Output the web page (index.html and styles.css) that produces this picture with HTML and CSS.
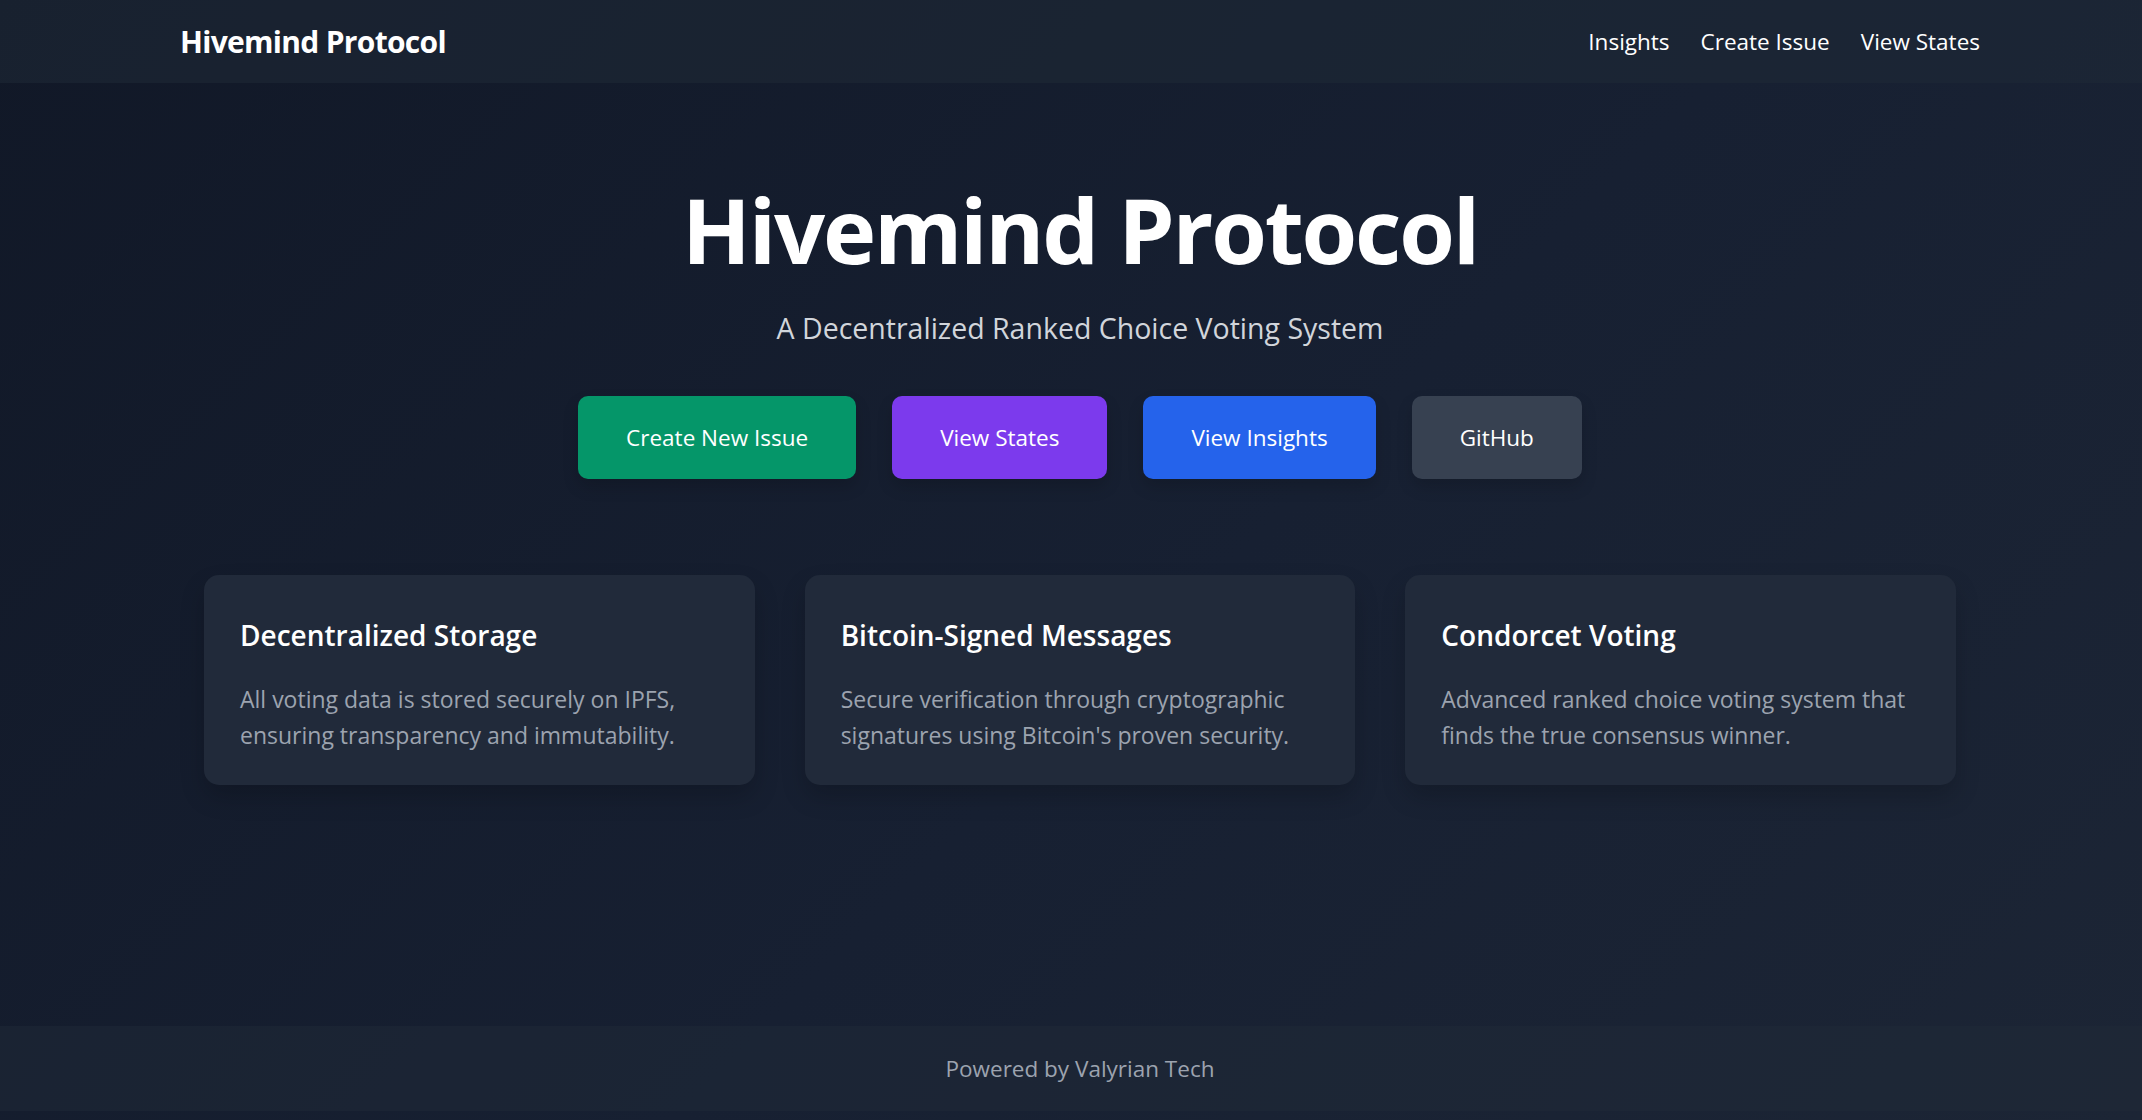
FILE: index.html
```html
<!DOCTYPE html>
<html lang="en">
<head>
<meta charset="utf-8">
<title>Hivemind Protocol</title>
<link rel="stylesheet" href="styles.css">
</head>
<body>
  <header class="site-header">
    <div class="container header-inner">
      <a class="logo" href="#">Hivemind Protocol</a>
      <nav class="nav">
        <a href="#">Insights</a>
        <a href="#">Create Issue</a>
        <a href="#">View States</a>
      </nav>
    </div>
  </header>

  <main class="main">
    <section class="hero">
      <h1 class="hero-title">Hivemind Protocol</h1>
      <p class="hero-sub">A Decentralized Ranked Choice Voting System</p>
      <div class="actions">
        <a class="btn btn-green" href="#">Create New Issue</a>
        <a class="btn btn-purple" href="#">View States</a>
        <a class="btn btn-blue" href="#">View Insights</a>
        <a class="btn btn-gray" href="#">GitHub</a>
      </div>
    </section>

    <section class="features">
      <div class="card">
        <h3 class="card-title">Decentralized Storage</h3>
        <p class="card-text">All voting data is stored securely on IPFS, ensuring transparency and immutability.</p>
      </div>
      <div class="card">
        <h3 class="card-title">Bitcoin-Signed Messages</h3>
        <p class="card-text">Secure verification through cryptographic signatures using Bitcoin's proven security.</p>
      </div>
      <div class="card">
        <h3 class="card-title">Condorcet Voting</h3>
        <p class="card-text">Advanced ranked choice voting system that finds the true consensus winner.</p>
      </div>
    </section>
  </main>

  <footer class="site-footer">
    <p class="footer-text">Powered by Valyrian Tech</p>
  </footer>
</body>
</html>
```

FILE: styles.css
```css
* { box-sizing: border-box; }

html, body {
  margin: 0;
  padding: 0;
  min-height: 100%;
}

body {
  font-family: "Open Sans", "Noto Sans", "Liberation Sans", sans-serif;
  color: #ffffff;
  background: linear-gradient(135deg, #111827 0%, #172032 55%, #1c2535 100%);
  min-height: 1120px;
  overflow-x: hidden;
}

a { color: inherit; text-decoration: none; }

.container {
  width: 1800px;
  margin: 0 auto;
}

.site-header {
  height: 83px;
  padding-left: 18px;
  background: rgba(31, 41, 55, 0.55);
}

.header-inner {
  height: 83px;
  display: flex;
  align-items: center;
  justify-content: space-between;
}

.logo {
  font-size: 30px;
  font-weight: 700;
  letter-spacing: -0.7px;
}

.nav {
  display: flex;
  gap: 31px;
  font-size: 22.5px;
}

.main {
  padding-left: 18px;
  height: 943px;
}

.hero {
  display: flex;
  flex-direction: column;
  align-items: center;
  padding-top: 101px;
}

.hero-title {
  margin: 0;
  font-size: 90px;
  line-height: 90px;
  font-weight: 700;
  letter-spacing: -2.2px;
}

.hero-sub {
  margin: 37px 0 0;
  font-size: 28.5px;
  line-height: 35px;
  color: #d1d5db;
}

.actions {
  display: flex;
  gap: 36px;
  margin-top: 50px;
}

.btn {
  height: 83px;
  display: flex;
  align-items: center;
  justify-content: center;
  padding: 0 48px;
  border-radius: 10px;
  font-size: 22.5px;
  box-shadow: 0 8px 16px rgba(0, 0, 0, 0.15);
}

.btn-green { background: #059669; }
.btn-purple { background: #7c3aed; }
.btn-blue { background: #2563eb; }
.btn-gray { background: #374151; }

.features {
  width: 1752px;
  margin: 96px auto 0;
  display: grid;
  grid-template-columns: repeat(3, 1fr);
  gap: 50px;
}

.card {
  height: 210px;
  background: #212a3a;
  border-radius: 15px;
  padding: 42px 36px 30px;
  box-shadow: 0 12px 24px rgba(0, 0, 0, 0.18);
}

.card-title {
  margin: 0;
  font-size: 28px;
  line-height: 36px;
  font-weight: 600;
}

.card-text {
  margin: 28px 0 0;
  font-size: 23px;
  line-height: 36px;
  color: #9ca3af;
}

.site-footer {
  height: 85px;
  padding-left: 18px;
  background: rgba(31, 41, 55, 0.5);
  display: flex;
  align-items: center;
  justify-content: center;
}

.footer-text {
  margin: 0;
  font-size: 22.5px;
  color: #9ca3af;
}
```
